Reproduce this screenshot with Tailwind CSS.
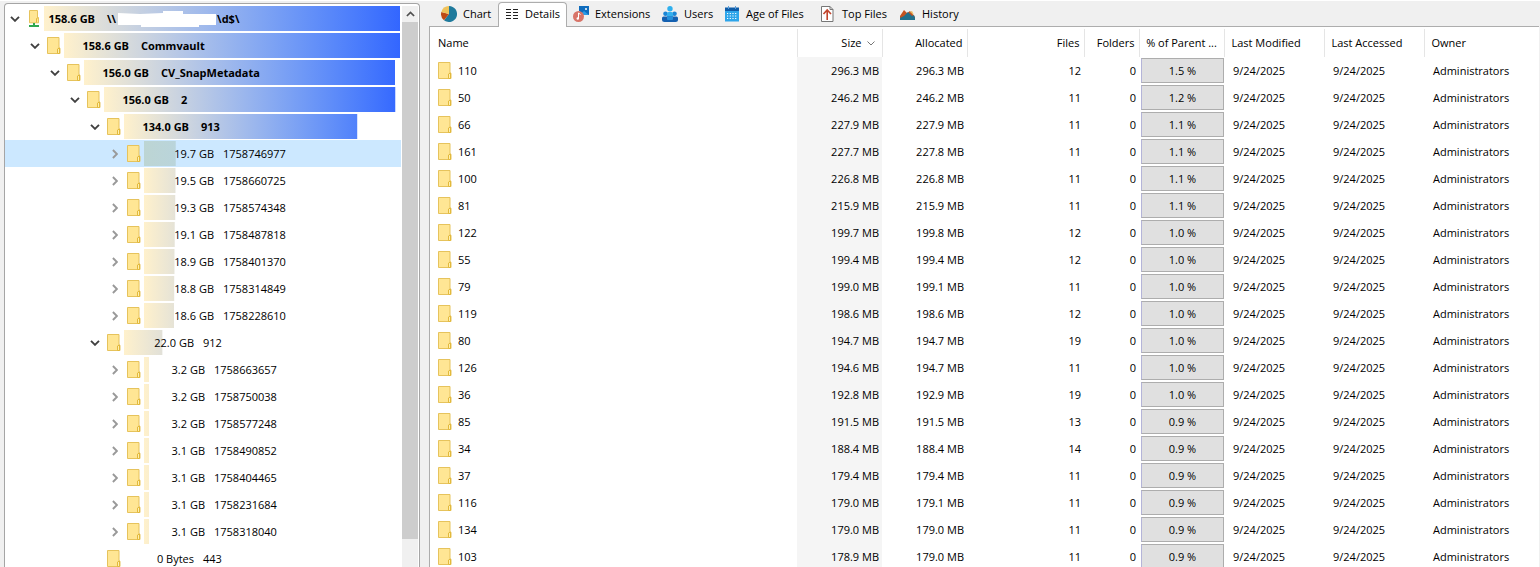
<!DOCTYPE html>
<html lang="en">
<head>
  <meta charset="UTF-8">
  <meta name="viewport" content="width=device-width, initial-scale=1.0">
  <title>Disk Usage</title>
  <script src="https://cdn.jsdelivr.net/npm/@tailwindcss/browser@4"></script>
</head>
<body class="h-screen overflow-hidden bg-[#f0f0f0] text-black text-[11px] leading-[16px] font-['Open_Sans','Noto_Sans',sans-serif]">

  <svg class="hidden">
    <symbol id="folder" viewBox="0 0 14 17">
      <path d="M.5.5h11.500v10.700h1v5.300H.5z" fill="#ffe694" stroke="#e6c35c"/>
      <path d="M10.500 16.500v-4.500l2-1v5.500z" fill="#fff0b0" stroke="#e2b93c"/>
    </symbol>
    <symbol id="drive" viewBox="0 0 10 17">
      <path d="M.5.5h8v7h1v5.300h-9z" fill="#ffe694" stroke="#e6c35c"/>
      <path d="M7.500 12.500V8.500l1.500-.8" fill="none" stroke="#e2b93c"/>
      <path d="M4 13h2v2h4v2H0v-2h4z" fill="#2fa84f"/>
    </symbol>
    <symbol id="down" viewBox="0 0 10 6">
      <path d="M1 .8l4 4 4-4" fill="none" stroke="currentColor" stroke-width="1.9"/>
    </symbol>
    <symbol id="right" viewBox="0 0 6 10">
      <path d="M.9 1l4 4-4 4" fill="none" stroke="currentColor" stroke-width="1.9"/>
    </symbol>
  </svg>

  <div class="flex h-full gap-[9px] border-t border-white pl-1 pr-px">

    <!-- Folder tree -->
    <aside class="mt-[2px] flex w-[416px] shrink-0 rounded-t-sm border border-b-0 border-[#a5a5a5] bg-white pr-px">
      <ul id="tree" class="min-w-0 flex-1 overflow-hidden pt-px"></ul>
      <div class="mt-[2px] flex w-4 flex-col bg-[#f0f0f0]">
        <button aria-label="Scroll up" class="flex h-4 items-center justify-center text-[#505050]">
          <svg class="h-[6px] w-[9px] rotate-180"><use href="#down"/></svg>
        </button>
        <div class="mb-7 flex-1 bg-[#cdcdcd]"></div>
      </div>
    </aside>

    <!-- Details -->
    <main class="flex min-w-0 flex-1 flex-col">
      <nav class="flex h-[26px] shrink-0 items-end border-b border-[#adadad] pl-[6px]">
        <button class="flex h-6 w-[63px] items-center gap-[6px] px-[6px] whitespace-nowrap">
          <svg class="size-4 shrink-0" viewBox="0 0 16 16">
            <path d="M8 0a8 8 0 1 1-5 14.200L8 8z" fill="#1f7a9c"/>
            <path d="M8 8L3 14.200A8 8 0 0 1 .3 6z" fill="#bf4a14"/>
            <path d="M8 8L.3 6A8 8 0 0 1 8 0z" fill="#f0c35a"/>
          </svg>
          Chart
        </button>
        <button class="-mb-px flex h-[25px] w-[69px] items-center gap-[6px] rounded-t-sm border border-b-0 border-[#adadad] bg-white px-[6px] pb-[2px] whitespace-nowrap">
          <svg class="h-4 w-[14px] shrink-0" viewBox="0 0 14 16">
            <path d="M1 3.500h5M8 3.500h5M1 6.500h5M8 6.500h5M1 9.500h5M8 9.500h5M1 12.500h5M8 12.500h5" stroke="#222"/>
          </svg>
          Details
        </button>
        <button class="flex h-6 w-[89px] items-center gap-[6px] px-[6px] whitespace-nowrap">
          <svg class="size-4 shrink-0" viewBox="0 0 16 16">
            <path d="M6 0h10v9h-5L6 5z" fill="#0f6cbd"/>
            <path d="M8 8l3-3 5 4h-6z" fill="#2b9be6"/>
            <circle cx="13" cy="3" r="1" fill="#fff"/>
            <circle cx="5.500" cy="10.500" r="5.500" fill="#d87468"/>
            <path d="M5.500 12.500V7l2 1.500" fill="none" stroke="#fff"/>
            <circle cx="4.800" cy="12.500" r="1.200" fill="#fff"/>
          </svg>
          Extensions
        </button>
        <button class="flex h-6 w-[62px] items-center gap-[6px] px-[6px] whitespace-nowrap">
          <svg class="size-4 shrink-0" viewBox="0 0 16 16">
            <circle cx="8" cy="2.700" r="2.700" fill="#2fb0ee"/>
            <circle cx="3.500" cy="7.800" r="2.300" fill="#1b86d6"/>
            <circle cx="12.500" cy="7.800" r="2.300" fill="#1b86d6"/>
            <rect x="5" y="6" width="6" height="5.500" rx="1.500" fill="#35b0ee"/>
            <path d="M0 12q0-1.500 1.500-1.500h13q1.500 0 1.500 1.500v1.500q0 2.500-2.500 2.500h-11Q0 16 0 13.500z" fill="#1460b0"/>
            <path d="M5 10.500h6v2.500q0 1-1 1H6q-1 0-1-1z" fill="#2590dc"/>
          </svg>
          Users
        </button>
        <button class="flex h-6 w-[96px] items-center gap-[6px] px-[6px] whitespace-nowrap">
          <svg class="size-4 shrink-0" viewBox="0 0 16 16">
            <path d="M1 2h14v13.500H1z" fill="#2da5ea"/>
            <path d="M1 1.500h14v3.500H1z" fill="#0f5ca8"/>
            <path d="M4.500 0v3M11.500 0v3" stroke="#5aa0dc"/>
            <path d="M3 7.500h10M3 10h10M3 12.500h10" stroke="#fff" stroke-dasharray="1.200 1.500"/>
          </svg>
          Age of Files
        </button>
        <button class="flex h-6 w-[80px] items-center gap-[6px] px-[6px] whitespace-nowrap">
          <svg class="size-4 shrink-0" viewBox="0 0 16 16">
            <path d="M1.500.5h8.500l3 3v12H1.500z" fill="#fff" stroke="#777"/>
            <path d="M10 .5v3h3" fill="none" stroke="#777"/>
            <path d="M7.200 14V4M3.500 8l3.700-4L11 8" fill="none" stroke="#c2452d" stroke-width="1.600"/>
          </svg>
          Top Files
        </button>
        <button class="flex h-6 items-center gap-[6px] px-[6px] whitespace-nowrap">
          <svg class="size-4 shrink-0" viewBox="0 0 16 16">
            <path d="M0 10l4-6 3 3 3-2 5 6v3H0z" fill="#c4531f"/>
            <path d="M10 6l2-1 2 4z" fill="#e8b95a"/>
            <path d="M0 12l4-2 4-4 4 4 2-1 1 3v2H0z" fill="#22708c"/>
          </svg>
          History
        </button>
      </nav>

      <div class="min-h-0 flex-1 overflow-hidden border-l border-[#adadad] bg-white pt-[2px]">
        <table class="w-full table-fixed border-collapse whitespace-nowrap">
          <colgroup>
            <col class="w-[367px]">
            <col class="w-[85px]">
            <col class="w-[85px]">
            <col class="w-[117px]">
            <col class="w-[55px]">
            <col class="w-[85px]">
            <col class="w-[100px]">
            <col class="w-[100px]">
            <col>
          </colgroup>
          <thead>
            <tr class="h-7 divide-x divide-[#e5e5e5] *:font-normal">
              <th class="pl-2 text-left">Name</th>
              <th class="pr-[7px]">
                <button class="flex w-full items-center justify-end gap-[5px]">
                  Size
                  <svg class="h-[5px] w-2 text-[#777]" viewBox="0 0 8 5"><path d="M.5.5L4 4 7.500.5" fill="none" stroke="currentColor"/></svg>
                </button>
              </th>
              <th class="pr-1 text-right">Allocated</th>
              <th class="pr-1 text-right">Files</th>
              <th class="pr-1 text-right">Folders</th>
              <th class="text-center">% of Parent ...</th>
              <th class="pl-[7px] text-left">Last Modified</th>
              <th class="pl-[7px] text-left">Last Accessed</th>
              <th class="pl-[7px] text-left">Owner</th>
            </tr>
          </thead>
          <tbody id="details"></tbody>
        </table>
      </div>
    </main>
  </div>

  <script>
    const blob = `
      <svg class="ml-[2px] mr-px h-[18px] w-[98px]" viewBox="0 0 98 18">
        <path d="M0 3l22 1 23-1V1h20v3h33v11H81v2H23v-2H0z" fill="#fff"/>
      </svg>`;

    // depth, share of the root, size, name, state
    const folders = [
      [0, 100, '158.6 GB', `\\\\${blob}\\d$\\`, 'open'],
      [1, 100, '158.6 GB', 'Commvault', 'open'],
      [2, 98.4, '156.0 GB', 'CV_SnapMetadata', 'open'],
      [3, 98.4, '156.0 GB', '2', 'open'],
      [4, 84.5, '134.0 GB', '913', 'open'],
      [5, 12.4, '19.7 GB', '1758746977', 'selected'],
      [5, 12.3, '19.5 GB', '1758660725', 'closed'],
      [5, 12.2, '19.3 GB', '1758574348', 'closed'],
      [5, 12.0, '19.1 GB', '1758487818', 'closed'],
      [5, 11.9, '18.9 GB', '1758401370', 'closed'],
      [5, 11.8, '18.8 GB', '1758314849', 'closed'],
      [5, 11.7, '18.6 GB', '1758228610', 'closed'],
      [4, 13.9, '22.0 GB', '912', 'open'],
      [5, 2, '3.2 GB', '1758663657', 'closed'],
      [5, 2, '3.2 GB', '1758750038', 'closed'],
      [5, 2, '3.2 GB', '1758577248', 'closed'],
      [5, 2, '3.1 GB', '1758490852', 'closed'],
      [5, 2, '3.1 GB', '1758404465', 'closed'],
      [5, 2, '3.1 GB', '1758231684', 'closed'],
      [5, 2, '3.1 GB', '1758318040', 'closed'],
      [4, 0, '0 Bytes', '443', 'leaf'],
    ];

    function sizeWidth(depth, share) {
      if (depth === 0) return 'w-[51px]';
      if (share > 50) return 'w-[65px]';
      return depth === 5 && share < 5 ? 'w-[61px]' : 'w-[70px]';
    }

    document.getElementById('tree').innerHTML = folders.map(([depth, share, size, name, state]) => {
      const arrow = state === 'leaf' ? '' : state === 'open'
        ? '<svg class="h-[6px] w-[10px] text-[#404040]"><use href="#down"/></svg>'
        : '<svg class="h-[10px] w-[6px] text-[#999]"><use href="#right"/></svg>';
      const icon = depth === 0
        ? '<svg class="h-[17px] w-[10px]"><use href="#drive"/></svg>'
        : '<svg class="h-[17px] w-[14px]"><use href="#folder"/></svg>';
      return `
        <li class="${state === 'selected' ? 'bg-[#cce8ff]' : ''} mr-px flex h-[27px] items-center" style="padding-left: ${depth * 20}px">
          <button aria-label="Toggle" class="flex h-5 w-5 shrink-0 items-center justify-center">${arrow}</button>
          <span class="flex w-[19px] shrink-0 justify-center pr-px">${icon}</span>
          <div class="relative mr-px flex h-[25px] min-w-0 flex-1 items-center ${share > 50 ? 'gap-3 font-bold' : 'gap-[9px]'}">
            <div class="absolute inset-0 ${state === 'selected' ? 'opacity-25 bg-linear-to-r from-[#8f9c50] to-[#3366ff]' : 'bg-linear-to-r from-[#fff1cc] to-[#3366ff]'}" style="clip-path: inset(0 ${100 - share}% 0 0)"></div>
            <span class="relative text-right whitespace-nowrap ${sizeWidth(depth, share)}">${size}</span>
            <span class="relative flex items-center whitespace-nowrap">${name}</span>
          </div>
        </li>`;
    }).join('');

    // name, size, allocated, files, % of parent
    const rows = [
      ['110', '296.3', '296.3', 12, '1.5'],
      ['50', '246.2', '246.2', 11, '1.2'],
      ['66', '227.9', '227.9', 11, '1.1'],
      ['161', '227.7', '227.8', 11, '1.1'],
      ['100', '226.8', '226.8', 11, '1.1'],
      ['81', '215.9', '215.9', 11, '1.1'],
      ['122', '199.7', '199.8', 12, '1.0'],
      ['55', '199.4', '199.4', 12, '1.0'],
      ['79', '199.0', '199.1', 11, '1.0'],
      ['119', '198.6', '198.6', 12, '1.0'],
      ['80', '194.7', '194.7', 19, '1.0'],
      ['126', '194.6', '194.7', 11, '1.0'],
      ['36', '192.8', '192.9', 19, '1.0'],
      ['85', '191.5', '191.5', 13, '0.9'],
      ['34', '188.4', '188.4', 14, '0.9'],
      ['37', '179.4', '179.4', 11, '0.9'],
      ['116', '179.0', '179.1', 11, '0.9'],
      ['134', '179.0', '179.0', 11, '0.9'],
      ['103', '178.9', '179.0', 11, '0.9'],
    ];

    document.getElementById('details').innerHTML = rows.map(([name, size, allocated, files, percent]) => `
      <tr class="h-[27px] *:p-0">
        <td><div class="flex items-center gap-[6px] pl-2"><svg class="h-[17px] w-[14px]"><use href="#folder"/></svg>${name}</div></td>
        <td class="bg-[#f5f5f5] text-right"><div class="pr-[3px]">${size} MB</div></td>
        <td class="text-right"><div class="pr-[3px]">${allocated} MB</div></td>
        <td class="text-right"><div class="pr-[3px]">${files}</div></td>
        <td class="text-right"><div class="pr-[3px]">0</div></td>
        <td><div class="ml-[2px] flex h-[25px] items-center justify-center border border-[#adadad] border-l-[#b4b4d8] bg-[#e0e0e0]">${percent} %</div></td>
        <td><div class="pl-[9px]">9/24/2025</div></td>
        <td><div class="pl-[9px]">9/24/2025</div></td>
        <td><div class="pl-[9px]">Administrators</div></td>
      </tr>`).join('');
  </script>
</body>
</html>
